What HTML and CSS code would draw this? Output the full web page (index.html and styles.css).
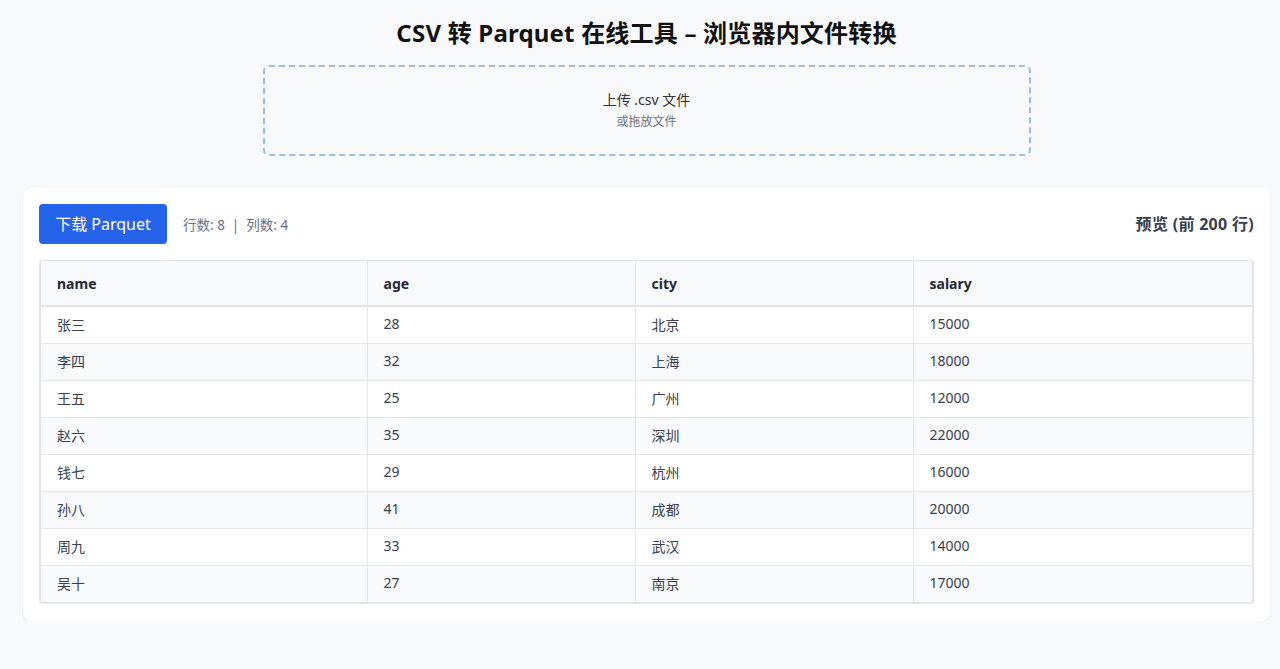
FILE: index.html
```html
<!DOCTYPE html>
<html lang="zh-CN">
<head>
<meta charset="utf-8">
<title>CSV 转 Parquet 在线工具</title>
<link rel="stylesheet" href="styles.css">
</head>
<body>
<div class="page">
  <h1 class="title">CSV 转 Parquet 在线工具 – 浏览器内文件转换</h1>
  <div class="dropzone">
    <div class="drop-main">上传 .csv 文件</div>
    <div class="drop-sub">或拖放文件</div>
  </div>
  <div class="card">
    <div class="toolbar">
      <div class="toolbar-left">
        <button class="btn">下载 Parquet</button>
        <span class="stats">行数: 8 &nbsp;|&nbsp; 列数: 4</span>
      </div>
      <div class="preview-label">预览 (前 200 行)</div>
    </div>
    <div class="table-wrap">
      <table class="grid">
        <colgroup>
          <col class="c1"><col class="c2"><col class="c3"><col class="c4">
        </colgroup>
        <thead>
          <tr><th>name</th><th>age</th><th>city</th><th>salary</th></tr>
        </thead>
        <tbody>
          <tr><td>张三</td><td>28</td><td>北京</td><td>15000</td></tr>
          <tr><td>李四</td><td>32</td><td>上海</td><td>18000</td></tr>
          <tr><td>王五</td><td>25</td><td>广州</td><td>12000</td></tr>
          <tr><td>赵六</td><td>35</td><td>深圳</td><td>22000</td></tr>
          <tr><td>钱七</td><td>29</td><td>杭州</td><td>16000</td></tr>
          <tr><td>孙八</td><td>41</td><td>成都</td><td>20000</td></tr>
          <tr><td>周九</td><td>33</td><td>武汉</td><td>14000</td></tr>
          <tr><td>吴十</td><td>27</td><td>南京</td><td>17000</td></tr>
        </tbody>
      </table>
    </div>
  </div>
</div>
</body>
</html>
```
FILE: styles.css
```css
* { box-sizing: border-box; }
html, body { margin: 0; padding: 0; }
body {
  background: #f8f9fb;
  font-family: "Noto Sans", "Noto Sans CJK SC", sans-serif;
  color: #1f2937;
}
.page {
  margin: 0 10px 0 23px;
  padding-top: 17px;
  display: flex;
  flex-direction: column;
  align-items: center;
}
.title {
  margin: 0;
  font-size: 24px;
  line-height: 32px;
  font-weight: 700;
  color: #111;
  letter-spacing: 0.2px;
}
.dropzone {
  margin-top: 16px;
  width: 768px;
  height: 91px;
  border: 2px dashed #9bbfe8;
  border-radius: 6px;
  display: flex;
  flex-direction: column;
  align-items: center;
  justify-content: center;
}
.drop-main {
  font-size: 14px;
  line-height: 20px;
  color: #333;
}
.drop-sub {
  font-size: 12px;
  line-height: 18px;
  color: #6b7280;
  margin-top: 3px;
}
.card {
  margin-top: 32px;
  width: 100%;
  background: #fff;
  border-radius: 8px;
  box-shadow: 0 1px 3px rgba(0,0,0,0.08);
  padding: 16px 16px 17px;
}
.toolbar {
  display: flex;
  align-items: center;
  justify-content: space-between;
}
.toolbar-left {
  display: flex;
  align-items: center;
  gap: 16px;
}
.btn {
  height: 40px;
  width: 128px;
  background: #2563eb;
  color: #fff;
  border: none;
  border-radius: 4px;
  font-family: inherit;
  font-size: 16px;
  padding: 0 0 2px;
}
.stats {
  font-size: 13.5px;
  color: #6b7280;
}
.preview-label {
  font-size: 16px;
  font-weight: 700;
  color: #374151;
  letter-spacing: 0.3px;
  padding-bottom: 2px;
}
.table-wrap {
  margin-top: 16px;
  border: 2px solid #e3e5ea;
  border-top-width: 1px;
  border-radius: 4px;
  overflow: hidden;
  box-shadow: inset 0 1px 0 #e3e5ea;
}
.grid {
  width: 100%;
  border-collapse: collapse;
  font-size: 14px;
}
.c1 { width: 326px; }
.c2 { width: 268px; }
.c3 { width: 278px; }
.grid th, .grid td {
  text-align: left;
  border-right: 1px solid #e5e7eb;
  padding: 0 16px;
}
.grid th:last-child, .grid td:last-child { border-right: none; }
.grid thead tr {
  height: 45px;
  background: #f8f9fb;
}
.grid th {
  font-weight: 700;
  color: #1f2937;
  border-bottom: 2px solid #e3e5ea;
  padding-top: 1px;
}
.grid tbody tr {
  height: 37px;
  border-top: 1px solid #e5e7eb;
}
.grid tbody tr:first-child { border-top: none; }
.grid tbody tr:nth-child(even) { background: #f9fafc; }
.grid td {
  color: #374151;
  padding-bottom: 2px;
}
```
